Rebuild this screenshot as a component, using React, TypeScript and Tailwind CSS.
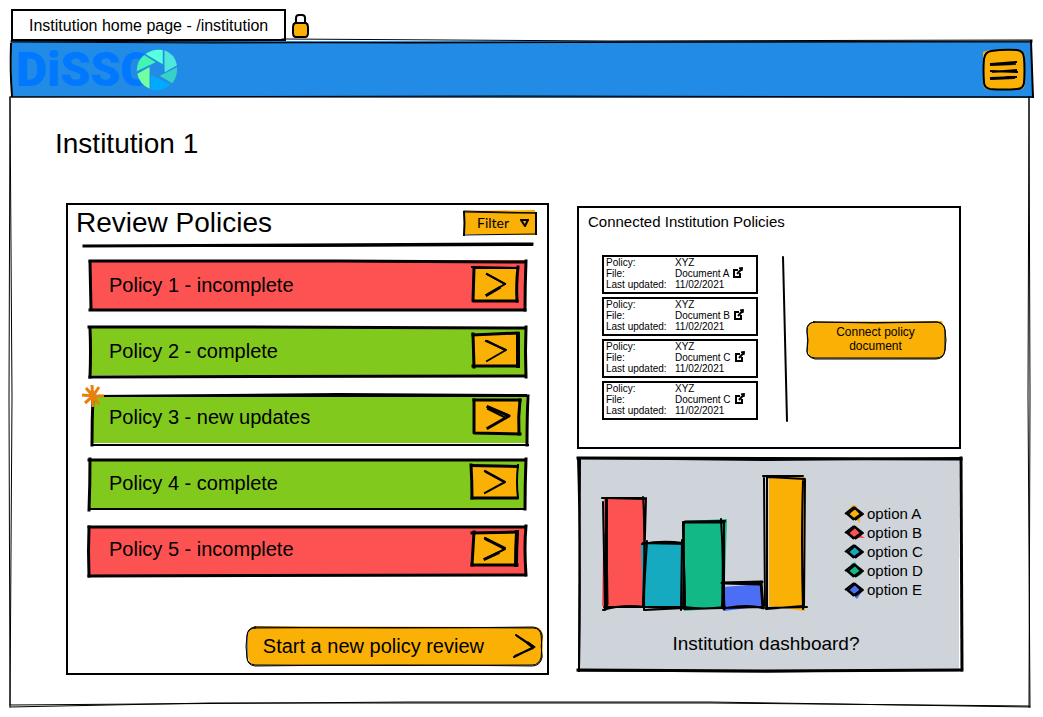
import type { ReactNode } from "react";

type Stroke = [d: string, width: number];

type SketchProps = {
  w: number;
  h: number;
  fill?: string;
  area?: string;
  strokes: Stroke[];
};

/** Hand-drawn outline that stretches with the box it decorates. */
function Sketch({ w, h, fill = "none", area, strokes }: SketchProps) {
  return (
    <svg
      aria-hidden="true"
      className="pointer-events-none absolute inset-0 size-full overflow-visible"
      viewBox={`0 0 ${w} ${h}`}
      preserveAspectRatio="none"
      fill="none"
      stroke="#000"
      strokeLinecap="square"
      strokeLinejoin="round"
    >
      {area && <path d={area} fill={fill} stroke="none" />}
      {strokes.map(([d, width]) => (
        <path key={d} d={d} strokeWidth={width} vectorEffect="non-scaling-stroke" />
      ))}
    </svg>
  );
}

const RED = "#fd5252";
const GREEN = "#82c91e";
const AMBER = "#fab005";

type Policy = {
  label: string;
  color: string;
  area: string;
  outline: Stroke[];
  box: Stroke[];
  arrow: Stroke[];
  updated?: boolean;
};

const policies: Policy[] = [
  {
    label: "Policy 1 - incomplete",
    color: RED,
    area: "M1 0L438 -1L438 48L2 48Z",
    outline: [
      ["M1 0L250 0L437 1", 3],
      ["M1 1L2 48", 3],
      ["M1 49L250 49L437 49", 3],
      ["M438 0Q437 24 437 49", 3],
    ],
    box: [
      ["M0 0L46 1", 2],
      ["M2 1L46 1", 2],
      ["M2 1L1 34L45 34", 3],
      ["M46 0Q44 18 45 34", 3],
    ],
    arrow: [
      ["M15 7L33 17L15 28", 2],
      ["M15 7L33 17", 2],
      ["M15 28L27 21", 3],
    ],
  },
  {
    label: "Policy 2 - complete",
    color: GREEN,
    area: "M1 1L437 1L437 49L2 48Z",
    outline: [
      ["M0 0L150 0L437 1", 3],
      ["M1 1Q2 24 1 50", 3],
      ["M1 50L437 49", 3],
      ["M438 0Q437 24 438 50", 3],
    ],
    box: [
      ["M1 2L46 0", 3],
      ["M1 1L2 34", 3],
      ["M1 33L46 33", 3],
      ["M46 1L46 33", 4],
    ],
    arrow: [
      ["M14 8L34 17L15 28", 2],
      ["M15 8L33 17", 2],
    ],
  },
  {
    label: "Policy 3 - new updates",
    color: GREEN,
    area: "M4 2L438 2L438 50L3 50Z",
    outline: [
      ["M4 3L250 1L438 2", 2],
      ["M3 3L438 3", 2],
      ["M4 3Q3 26 3 52", 3],
      ["M3 52L440 52", 2],
      ["M440 3Q439 24 439 52", 3],
    ],
    box: [
      ["M2 1L48 1", 3],
      ["M2 1L2 34L48 35", 3],
      ["M48 1Q46 18 47 35", 3],
    ],
    arrow: [
      ["M16 8L37 17L16 29", 3],
      ["M16 8L36 16", 2],
      ["M16 10L34 19", 2],
    ],
    updated: true,
  },
  {
    label: "Policy 4 - complete",
    color: GREEN,
    area: "M1 1L437 1L438 50L1 50Z",
    outline: [
      ["M0 1L437 1", 3],
      ["M1 0Q1 26 0 51", 3],
      ["M0 50L437 50", 2],
      ["M438 0Q437 26 437 50", 3],
    ],
    box: [
      ["M-1 0L45 1", 2],
      ["M-1 1L46 2", 2],
      ["M-1 0Q0 16 0 33", 3],
      ["M0 33L45 33", 3],
      ["M46 0Q44 18 46 33", 2],
    ],
    arrow: [
      ["M13 6L33 17L13 28", 2],
      ["M14 7L32 17", 2],
    ],
  },
  {
    label: "Policy 5 - incomplete",
    color: RED,
    area: "M0 2L437 1L437 50L-1 50Z",
    outline: [
      ["M0 2L437 2", 3],
      ["M0 2Q-1 26 0 51", 3],
      ["M0 51L437 50", 3],
      ["M438 1Q436 22 438 50", 3],
    ],
    box: [
      ["M0 2L45 1", 3],
      ["M2 1L0 34", 3],
      ["M0 34L45 34", 3],
      ["M45 1Q44 18 44 34", 4],
    ],
    arrow: [
      ["M13 7L33 18L13 28", 2],
      ["M14 8L32 17", 3],
      ["M13 28L26 22", 3],
    ],
  },
];

const documents = ["Document A", "Document B", "Document C", "Document C"];

const legend = [
  { label: "option A", color: AMBER, spill: "M0 8L8 0L12 1L3 11ZM10 13L15 18L15 13Z" },
  { label: "option B", color: RED, spill: "M11 8L20 14L11 14Z" },
  { label: "option C", color: "#15aabf", spill: "M4 10L13 7L9 14Z" },
  { label: "option D", color: "#12b886", spill: "M6 2L10 0L17 12L12 15Z" },
  { label: "option E", color: "#4c6ef5", spill: "M18 9L12 18L8 14Z" },
];

function Panel({ title, className, children }: { title: string; className: string; children: ReactNode }) {
  return (
    <section aria-label={title} className={className}>
      {children}
    </section>
  );
}

function Lock() {
  return (
    <svg aria-label="Locked" role="img" className="mt-[5px] ml-[6px] h-[24px] w-[18px]" viewBox="0 0 18 24" fill="none" stroke="#000" strokeWidth="2">
      <path d="M4 10V4Q4 1 7 1H10Q13 1 13 4V10" />
      <path d="M3 9H14Q16 10 16 13V19Q16 23 13 23H4Q1 23 1 19V13Q1 10 3 9Z" fill={AMBER} />
    </svg>
  );
}

function Logo() {
  return (
    <a href="#home" aria-label="DiSSCo" className="relative flex h-[42px] items-center pl-[6px]">
      <span className="font-[Roboto,sans-serif] text-[48px] leading-[42px] font-black text-[#0078ff]">DiSSC</span>
      <svg aria-hidden="true" className="absolute top-0 left-[126px] size-[42px]" viewBox="409 148 124 124">
        <circle cx="471" cy="210" r="58" fill="#228be6" />
        <path d="M437 163Q460 146 488 151V193Z" fill="#57ffdc" />
        <path d="M493 152Q523 162 530 196L494 217L493 196Z" fill="#50e8dd" />
        <path d="M530 202Q532 230 516 249L479 227L493 220Z" fill="#37d1c5" />
        <path d="M512 253Q484 277 451 266L454 225Z" fill="#00aaff" />
        <path d="M449 265Q418 251 413 221L449 201Z" fill="#72ff9f" />
        <path d="M411 214Q412 182 433 166L467 187Z" fill="#43f5b3" />
      </svg>
    </a>
  );
}

function PolicyRow({ policy }: { policy: Policy }) {
  return (
    <li className="relative flex h-[50px] items-center justify-between pr-[8px] pb-[3px] pl-[20px]">
      <Sketch w={439} h={50} fill={policy.color} area={policy.area} strokes={policy.outline} />
      {policy.updated && (
        <svg aria-label="New" role="img" className="absolute -top-[8px] -left-[7px] size-[22px]" viewBox="0 0 22 22" fill="none" stroke="#e8800c" strokeWidth="3">
          <path d="M0 10L11 11L23 11M10 0L11 22M4 3L11 11L17 19M17 2L11 11L3 18M7 11H16M11 6V16" />
        </svg>
      )}
      <span className="relative text-[20px] leading-[24px]">{policy.label}</span>
      <button type="button" aria-label={`Open ${policy.label}`} className="relative h-[35px] w-[47px]">
        <Sketch w={47} h={35} fill={AMBER} area="M1 1L46 1L46 34L1 34Z" strokes={policy.box} />
        <Sketch w={47} h={35} strokes={policy.arrow} />
      </button>
    </li>
  );
}

function ExternalIcon() {
  return (
    <svg aria-hidden="true" className="-mt-px h-[11px] w-[11px]" viewBox="0 0 11 11" fill="none" stroke="#000">
      <path d="M6 3H2V10H8V6" strokeWidth="2" />
      <path d="M5 7L9 2.500" strokeWidth="2" />
      <path d="M7 1L10.500 0.500L10 4Z" fill="#000" strokeWidth="1" />
    </svg>
  );
}

function Chart() {
  return (
    <svg
      role="img"
      aria-label="Options bar chart"
      className="h-[140px] w-[210px] shrink-0 overflow-visible"
      viewBox="0 0 210 140"
      fill="none"
      stroke="#000"
      strokeLinecap="round"
    >
      <g stroke="none">
        <path d="M4 23L45 23L45 132L2 132Z" fill={RED} />
        <path d="M41 69L83 71L82 133L43 133Z" fill="#15aabf" />
        <path d="M84 47L127 45L124 134L84 137Z" fill="#12b886" />
        <path d="M123 113L161 110L163 132L124 137Z" fill="#4c6ef5" />
        <path d="M169 3L205 3L205 137L169 132Z" fill={AMBER} />
      </g>
      <path d="M2 24L44 24M6 25L6 133M3 28L5 136M46 24L43 133M43 23Q45 44 44 136" strokeWidth="2" />
      <path d="M7 25L7 131M5 24L45 25" strokeWidth="2" />
      <path d="M42 70Q62 66 83 69M43 69L83 70M47 67L43 133M82 66L81 136M83 49L85 133" strokeWidth="2" />
      <path d="M84 48L125 47M83 48L85 134M84 49L83 134M121 45Q124 90 122 133M124 47L124 135" strokeWidth="2" />
      <path d="M85 48L124 48M122 109L162 108M124 109L160 110M161 108L163 134M123 112L124 135" strokeWidth="3" />
      <path d="M163 2L203 2M168 3L205 5M164 4L165 132M167 3L167 135M205 6L204 133M203 7Q201 68 203 135" strokeWidth="2" />
      <path d="M3 136Q22 130 45 133L84 133Q104 136 125 133M4 133L44 133L82 134M45 136L84 134M84 135L162 133M126 134Q148 130 162 134M165 134L207 133M166 135L203 132" strokeWidth="2" />
      <path d="M6 60L7 130" strokeWidth="3" />
    </svg>
  );
}

export default function App() {
  return (
    <div className="w-full bg-white pt-[9px] pr-[10px] pb-[10px] pl-[10px] font-['Liberation_Sans',Arial,sans-serif] text-black">
      <div className="flex h-[32px] items-start pl-px">
        <div className="flex h-[32px] items-center border-2 border-black px-[16px] pt-px text-[16px]">Institution home page - /institution</div>
        <Lock />
      </div>

      <header className="relative flex h-[56px] items-center justify-between pt-px pr-[7px]">
        <Sketch
          w={1023}
          h={56}
          fill="#228be6"
          area="M1 0L1022 0L1022 57L2 56Z"
          strokes={[
            ["M1 0L400 2L1022 0", 1],
            ["M272 -2L600 0L1022 -1", 1],
            ["M1 1L200 2L600 1L1022 1", 1],
            ["M1 3Q0 30 2 55", 2],
            ["M1 56L500 55L1022 56", 1],
            ["M1 56L300 56L1022 56", 1],
            ["M1021 0L1023 56", 2],
          ]}
        />
        <Logo />
        <button type="button" aria-label="Menu" className="relative h-[42px] w-[44px]">
          <Sketch
            w={44}
            h={42}
            fill={AMBER}
            area="M7 1L36 1Q43 2 43 8L43 34Q43 41 36 41L7 41Q1 40 1 34L1 3Z"
            strokes={[
              ["M9 2Q22 0 35 1Q42 2 42 9Q43 21 42 34Q41 40 35 40Q22 41 8 40Q2 39 2 33Q1 21 2 10Q3 3 9 2Z", 2],
              ["M9 15L34 13M9 16L33 15M10 15L33 14", 2],
              ["M9 22L35 23M11 23L34 21", 2],
              ["M9 30L34 28M10 30L32 29M9 29L34 28", 2],
            ]}
          />
        </button>
      </header>

      <main className="relative mr-[4px] pt-[31px] pb-[32px]">
        <Sketch
          w={1019}
          h={610}
          strokes={[
            ["M0 0L2 300L0 610", 1],
            ["M0 0L-1 300L0 608", 1],
            ["M1019 0L1018 300L1020 610", 1],
            ["M1019 0L1020 300L1019 610", 1],
            ["M0 608L400 605L700 605L1020 610", 1],
            ["M0 610L200 606L700 606L1019 609", 1],
          ]}
        />
        <h1 className="pl-[45px] text-[28px] leading-[32px]">Institution 1</h1>

        <div className="mt-[43px] grid grid-cols-[483fr_384fr] items-start gap-[28px] pr-[68px] pl-[56px]">
          <Panel title="Review Policies" className="flex min-w-0 flex-col border-2 border-black pb-[7px]">
            <div className="flex h-[36px] items-center justify-between pr-[10px] pl-[8px]">
              <h2 className="text-[28px] leading-[32px]">Review Policies</h2>
              <button type="button" className="relative flex h-[24px] w-[74px] items-center justify-between pr-[8px] pl-[14px]">
                <Sketch
                  w={74}
                  h={24}
                  fill={AMBER}
                  area="M2 0L72 -1L73 24L2 23Z"
                  strokes={[
                    ["M1 0L73 2", 1],
                    ["M2 1L50 2L73 2", 1],
                    ["M1 1Q2 12 1 24", 2],
                    ["M1 24L72 23", 1],
                    ["M73 2L73 23", 2],
                  ]}
                />
                <span className="relative font-[Lato,sans-serif] text-[14px] leading-[20px]">Filter</span>
                <svg aria-hidden="true" className="relative h-[8px] w-[9px]" viewBox="0 0 9 8" fill="none" stroke="#000" strokeWidth="2">
                  <path d="M1 1H8L5 7Z" />
                </svg>
              </button>
            </div>
            <div aria-hidden="true" className="relative mt-px mr-[13px] ml-[15px] h-[6px]">
              <Sketch w={452} h={6} strokes={[["M1 4L220 3L450 2", 3], ["M2 4L220 4L450 3", 2]]} />
            </div>
            <ul className="mt-[13px] mr-[20px] ml-[21px] flex flex-col gap-4">
              {policies.map((policy) => (
                <PolicyRow key={policy.label} policy={policy} />
              ))}
            </ul>
            <button type="button" className="relative mt-[51px] mr-[4px] flex h-[40px] items-center gap-[29px] self-end pr-[7px] pl-[17px] text-[20px]">
              <Sketch
                w={297}
                h={40}
                fill={AMBER}
                area="M9 0L290 1Q296 3 297 10L296 31Q295 38 287 39L8 39Q2 37 2 30L2 8Q3 2 9 0Z"
                strokes={[
                  ["M9 1Q150 3 287 1Q295 2 296 10Q294 20 296 31Q294 40 286 40Q150 38 9 40Q1 39 1 31Q-1 20 1 10Q1 2 9 1Z", 1],
                  ["M9 2Q150 1 287 2Q294 2 295 10Q296 20 295 31Q293 39 286 39Q150 40 9 39Q1 38 1 31L1 10Q2 2 9 2Z", 1],
                ]}
              />
              <span className="relative">Start a new policy review</span>
              <svg aria-hidden="true" className="relative h-[24px] w-[23px]" viewBox="0 0 23 24" fill="none" stroke="#000" strokeLinecap="round">
                <path d="M3 1L21 13L1 23M4 2L20 13M2 22L20 14" strokeWidth="2" />
                <path d="M15 9L20 13" strokeWidth="3" />
              </svg>
            </button>
          </Panel>

          <div className="mt-[3px] flex min-w-0 flex-col gap-[8px]">
            <Panel title="Connected Institution Policies" className="border-2 border-black pt-[4px] pb-[25px]">
              <h2 className="pl-[9px] text-[15px] leading-[20px]">Connected Institution Policies</h2>
              <div className="mt-[23px] flex pl-[23px]">
                <ul className="flex w-[156px] shrink-0 flex-col gap-[3px]">
                  {documents.map((name, index) => (
                    <li key={index} className="h-[39px] border-2 border-black pl-[2px] text-[10px] leading-[11px]">
                      <dl className="grid grid-cols-[69px_1fr]">
                        <dt>Policy:</dt>
                        <dd>XYZ</dd>
                        <dt>File:</dt>
                        <dd>
                          <a href="#document" className="flex h-[11px] gap-[3px] whitespace-nowrap">
                            {name}
                            <ExternalIcon />
                          </a>
                        </dd>
                        <dt>Last updated:</dt>
                        <dd>11/02/2021</dd>
                      </dl>
                    </li>
                  ))}
                </ul>
                <svg aria-hidden="true" className="mt-[2px] ml-[25px] h-[165px] w-[5px] shrink-0 overflow-visible" viewBox="0 0 5 165">
                  <path d="M0 0L1 40L4 164" fill="none" stroke="#000" strokeWidth="2" strokeLinecap="round" />
                </svg>
                <div className="flex flex-1 items-center justify-center pt-[3px] pl-[4px]">
                  <button type="button" className="relative w-[140px] px-[28px] pt-[4px] pb-[6px] text-[12px] leading-[14px]">
                    <Sketch
                      w={140}
                      h={38}
                      fill={AMBER}
                      area="M7 1L136 0L139 8L139 31Q137 37 130 38L8 37Q2 36 2 29L2 8Q2 2 7 1Z"
                      strokes={[
                        ["M8 1Q70 3 131 1Q138 2 139 9Q141 19 139 29Q138 37 130 37L9 37Q1 36 1 30Q3 19 1 10Q0 2 8 1Z", 1],
                        ["M8 1Q70 2 131 1Q138 2 139 9L139 29Q138 38 130 38L9 38Q1 36 1 30Q2 19 1 10Q1 2 8 1Z", 1],
                      ]}
                    />
                    <span className="relative">Connect policy document</span>
                  </button>
                </div>
              </div>
            </Panel>

            <Panel title="Institution dashboard" className="relative pt-[17px] pb-[16px]">
              <Sketch
                w={384}
                h={215}
                fill="#ced4da"
                area="M2 1L382 2L382 215L3 213Z"
                strokes={[
                  ["M1 1L384 2", 3],
                  ["M3 1L190 3L384 1", 2],
                  ["M1 1Q4 100 2 214", 2],
                  ["M3 2L2 214", 2],
                  ["M1 213L190 214L384 213", 3],
                  ["M1 214L190 215L384 213", 1],
                  ["M384 1L385 213", 3],
                ]}
              />
              <div className="relative flex items-start pl-[23px]">
                <Chart />
                <ul className="mt-[30px] ml-[35px] text-[15px] leading-[19px]">
                  {legend.map(({ label, color, spill }) => (
                    <li key={label} className="flex items-center gap-[4px]">
                      <svg aria-hidden="true" className="h-[17px] w-[18px] overflow-visible" viewBox="0 0 18 17" strokeLinejoin="round">
                        <path d={spill} fill={color} />
                        <path d="M3 9L10 3L16 9L9 14Z" fill={color} stroke="#000" strokeWidth="2" />
                        <path d="M0 9L9 2M1 8L9 15M9 2L18 9L10 15" fill="none" stroke="#000" strokeWidth="2" />
                      </svg>
                      {label}
                    </li>
                  ))}
                </ul>
              </div>
              <h2 className="relative mt-[18px] pr-[6px] text-center text-[19px] leading-[24px]">Institution dashboard?</h2>
            </Panel>
          </div>
        </div>
      </main>
    </div>
  );
}
